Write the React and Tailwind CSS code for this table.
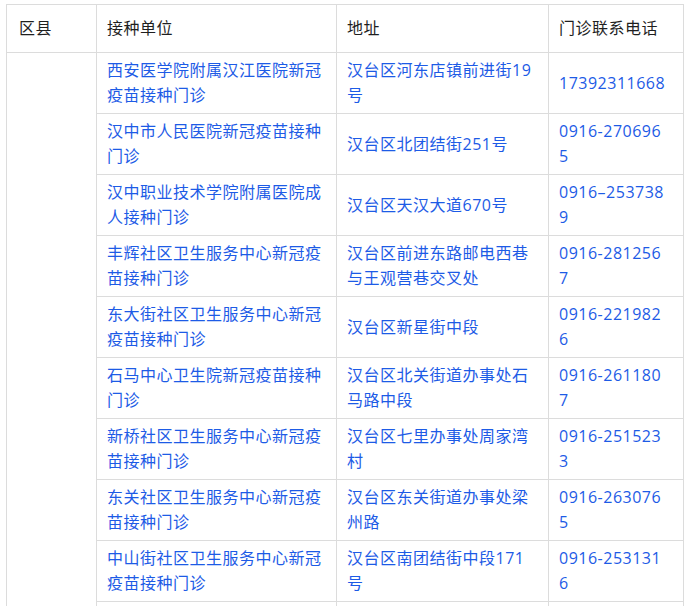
import React from 'react';

const rows = [
    { name: '西安医学院附属汉江医院新冠疫苗接种门诊', addr: '汉台区河东店镇前进街19号', tel: '17392311668' },
    { name: '汉中市人民医院新冠疫苗接种门诊', addr: '汉台区北团结街251号', tel: '0916-2706965' },
    { name: '汉中职业技术学院附属医院成人接种门诊', addr: '汉台区天汉大道670号', tel: '0916–2537389' },
    { name: '丰辉社区卫生服务中心新冠疫苗接种门诊', addr: '汉台区前进东路邮电西巷与王观营巷交叉处', tel: '0916-2812567' },
    { name: '东大街社区卫生服务中心新冠疫苗接种门诊', addr: '汉台区新星街中段', tel: '0916-2219826' },
    { name: '石马中心卫生院新冠疫苗接种门诊', addr: '汉台区北关街道办事处石马路中段', tel: '0916-2611807' },
    { name: '新桥社区卫生服务中心新冠疫苗接种门诊', addr: '汉台区七里办事处周家湾村', tel: '0916-2515233' },
    { name: '东关社区卫生服务中心新冠疫苗接种门诊', addr: '汉台区东关街道办事处梁州路', tel: '0916-2630765' },
    { name: '中山街社区卫生服务中心新冠疫苗接种门诊', addr: '汉台区南团结街中段171号', tel: '0916-2531316' },
    // next row starts at the bottom edge, only its borders show
    { name: '', addr: '', tel: '' },
];

const th = 'border border-[#dcdcdc] px-[10px] py-[11px] text-left font-normal text-[#1f1f1f] align-middle';
const td = 'border border-[#dcdcdc] px-[10px] py-[5px] text-left text-[#1d5be6] align-middle break-all';

const App = () => {
    return (
        <div className="bg-white w-[690px] h-[606px] overflow-hidden pt-1 pl-[6px] font-['Open_Sans','Noto_Sans_CJK_SC',sans-serif] text-[16px] leading-[25px] tracking-[0.5px]">
            <table className="table-fixed border-collapse w-[677px]">
                <colgroup>
                    <col className="w-[90px]" />
                    <col className="w-[240px]" />
                    <col className="w-[212px]" />
                    <col className="w-[135px]" />
                </colgroup>
                <thead>
                    <tr>
                        <th className={th + ' pl-3'}>区县</th>
                        <th className={th}>接种单位</th>
                        <th className={th}>地址</th>
                        <th className={th}>门诊联系电话</th>
                    </tr>
                </thead>
                <tbody>
                    {rows.map((r, i) => (
                        <tr key={i} className="h-[61px]">
                            {i === 0 && <td rowSpan={rows.length} className={td}></td>}
                            <td className={td}>{r.name}</td>
                            <td className={td}>{r.addr}</td>
                            <td className={td + ' pr-[16px]'}>{r.tel}</td>
                        </tr>
                    ))}
                </tbody>
            </table>
        </div>
    );
};

export default App;
